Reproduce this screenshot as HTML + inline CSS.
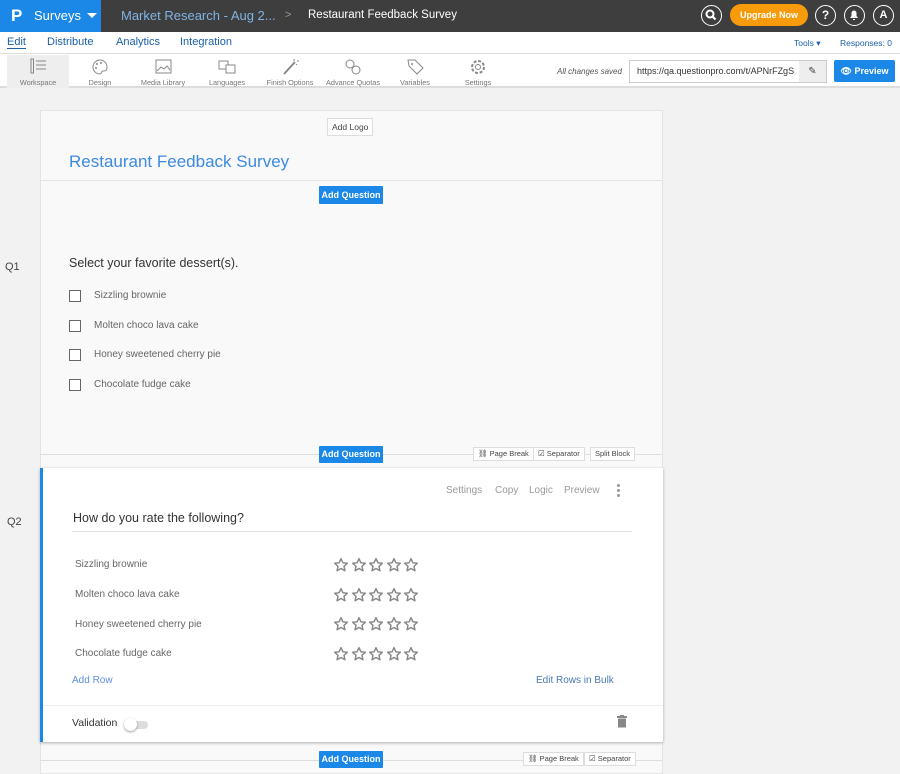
<!DOCTYPE html>
<html><head><meta charset="utf-8">
<style>
*{box-sizing:border-box;margin:0;padding:0}
body{width:900px;height:774px;overflow:hidden;background:#f2f2f2;font-family:"Liberation Sans",sans-serif;position:relative;color:#333}
.a{position:absolute}
.top{left:0;top:0;width:900px;height:32px;background:#3e3e3e}
.blue{left:0;top:0;width:101px;height:32px;background:#1b87e6;color:#fff}
.nav{left:0;top:32px;width:900px;height:22px;background:#fff;border-bottom:1px solid #ddd}
.tb{left:0;top:54px;width:900px;height:34px;background:#fff;border-bottom:2px solid #ddd}
.ti{position:absolute;top:0;height:33px;text-align:center;font-size:7.3px;color:#777}
.ti svg{display:block;margin:3px auto 0}
.ti span{position:absolute;left:0;right:0;top:23px;white-space:nowrap}
.btn{background:#1b87e6;color:#fff;font-size:9px;font-weight:bold;text-align:center;line-height:18px;height:18px;width:64px;border-radius:1px}
.sm{background:#fff;border:1px solid #ddd;font-size:7.5px;color:#444;height:14px;line-height:12px;padding:0 4px;white-space:nowrap}
.opt{font-size:10px;color:#666}
.cb{width:12px;height:12px;border:1px solid #666;background:#fff}
.row{font-size:10px;color:#666;left:75px}
</style></head><body>
<div class="a top"></div>
<div class="a blue">
<div class="a" style="left:11px;top:6px;font-size:17px;font-weight:bold">P</div>
<div class="a" style="left:34px;top:8px;font-size:13px">Surveys</div>
<div class="a" style="left:87px;top:13px;width:0;height:0;border-left:5px solid transparent;border-right:5px solid transparent;border-top:5px solid #fff"></div>
</div>
<div class="a" style="left:121px;top:8px;font-size:13px;color:#7fb4e4">Market Research - Aug 2...</div>
<div class="a" style="left:285px;top:9px;font-size:11px;color:#999">&gt;</div>
<div class="a" style="left:308px;top:9px;font-size:11.5px;color:#fff">Restaurant Feedback Survey</div>
<div class="a" style="left:701px;top:5px;width:21px;height:21px;border:1.5px solid #fff;border-radius:50%"><svg width="18" height="18" viewBox="0 0 18 18"><circle cx="8" cy="8" r="3.5" stroke="#fff" stroke-width="2" fill="none"/><path d="M10.5 10.5l3 3" stroke="#fff" stroke-width="2.2"/></svg></div>
<div class="a" style="left:730px;top:4px;width:78px;height:22px;border-radius:11px;background:#f79b0b;color:#fff;font-size:9px;font-weight:bold;text-align:center;line-height:22px">Upgrade Now</div>
<div class="a" style="left:815px;top:5px;width:21px;height:21px;border:1.5px solid #fff;border-radius:50%;color:#fff;font-weight:bold;font-size:12px;text-align:center;line-height:18px">?</div>
<div class="a" style="left:844px;top:5px;width:21px;height:21px;border:1.5px solid #fff;border-radius:50%"><svg width="18" height="18" viewBox="0 0 18 18"><path d="M5 12h8l-1.5-2V7a2.5 2.5 0 0 0-5 0v3z M8 13h2v1H8z" fill="#fff"/></svg></div>
<div class="a" style="left:873px;top:5px;width:21px;height:21px;border:1.5px solid #fff;border-radius:50%;color:#fff;font-weight:bold;font-size:11px;text-align:center;line-height:18px">A</div>

<div class="a nav"></div>
<div class="a" style="left:7px;top:36px;font-size:11px;color:#1a5fa8;border-bottom:1px solid #1a5fa8;line-height:12px">Edit</div>
<div class="a" style="left:47px;top:36px;font-size:11px;color:#1a5fa8">Distribute</div>
<div class="a" style="left:116px;top:36px;font-size:11px;color:#1a5fa8">Analytics</div>
<div class="a" style="left:180px;top:36px;font-size:11px;color:#1a5fa8">Integration</div>
<div class="a" style="left:794px;top:38px;font-size:8.5px;color:#1a5fa8">Tools ▾</div>
<div class="a" style="left:840px;top:38px;font-size:8.5px;color:#1a5fa8">Responses: 0</div>

<div class="a tb"></div>
<div class="ti" style="left:7px;top:55px;width:62px;background:#eee"><svg width="20" height="18" viewBox="0 0 20 18"><rect x="3" y="1" width="2.5" height="14" fill="none" stroke="#888"/><path d="M8 3h10M8 7h10M8 11h10" stroke="#888"/></svg><span>Workspace</span></div>
<div class="ti" style="left:75px;top:55px;width:50px"><svg width="20" height="18" viewBox="0 0 20 18"><path d="M10 2a7 7 0 1 0 0 14c2 0 1-3 3-3s4 0 4-4a7 7 0 0 0-7-7z" fill="none" stroke="#888"/><circle cx="7" cy="6" r="1" fill="#888"/><circle cx="11" cy="5" r="1" fill="#888"/><circle cx="6" cy="10" r="1" fill="#888"/></svg><span>Design</span></div>
<div class="ti" style="left:138px;top:55px;width:50px"><svg width="20" height="18" viewBox="0 0 20 18"><rect x="3" y="2" width="15" height="13" fill="none" stroke="#888"/><path d="M4 13l4-4 3 2 3-3 3 4" fill="none" stroke="#888"/></svg><span>Media Library</span></div>
<div class="ti" style="left:202px;top:55px;width:50px"><svg width="20" height="18" viewBox="0 0 20 18"><rect x="2" y="3" width="9" height="8" fill="none" stroke="#888"/><rect x="9" y="7" width="9" height="8" fill="#fff" stroke="#888"/></svg><span>Languages</span></div>
<div class="ti" style="left:264px;top:55px;width:52px"><svg width="20" height="18" viewBox="0 0 20 18"><path d="M4 16L15 4" stroke="#888" stroke-width="2"/><path d="M14 1v2M17 3h2M16 6l1 1" stroke="#888"/></svg><span>Finish Options</span></div>
<div class="ti" style="left:324px;top:55px;width:58px"><svg width="20" height="18" viewBox="0 0 20 18"><circle cx="7" cy="6" r="4" fill="none" stroke="#888"/><circle cx="13" cy="12" r="4" fill="none" stroke="#888"/></svg><span>Advance Quotas</span></div>
<div class="ti" style="left:390px;top:55px;width:50px"><svg width="20" height="18" viewBox="0 0 20 18"><path d="M3 2h7l8 8-6 6-8-8z" fill="none" stroke="#888"/><circle cx="7" cy="6" r="1" fill="#888"/></svg><span>Variables</span></div>
<div class="ti" style="left:453px;top:55px;width:50px"><svg width="20" height="18" viewBox="0 0 20 18"><circle cx="10" cy="9" r="6" fill="none" stroke="#888" stroke-width="2" stroke-dasharray="3 1.7"/><circle cx="10" cy="9" r="2.5" fill="none" stroke="#888"/></svg><span>Settings</span></div>
<div class="a" style="left:557px;top:67px;font-size:8px;color:#555;font-style:italic">All changes saved</div>
<div class="a" style="left:629px;top:60px;width:198px;height:23px;border:1px solid #ccc;background:#fff;font-size:9px;color:#333;line-height:21px;padding-left:7px;overflow:hidden;white-space:nowrap">https://qa.questionpro.com/t/APNrFZgS</div>
<div class="a" style="left:799px;top:61px;width:27px;height:21px;background:#eee;font-size:10px;text-align:center;line-height:21px;color:#444">✎</div>
<div class="a" style="left:834px;top:60px;width:61px;height:22px;background:#1b87e6;color:#fff;font-size:9px;font-weight:bold;line-height:22px;text-align:center;border-radius:2px">👁 Preview</div>

<div class="a" style="left:40px;top:110px;width:623px;height:664px;background:#f9f9f9;border:1px solid #e3e3e3"></div>
<div class="a sm" style="left:327px;top:118px;height:18px;line-height:16px;font-size:8.5px">Add Logo</div>
<div class="a" style="left:69px;top:152px;font-size:17px;color:#3d8ae2">Restaurant Feedback Survey</div>
<div class="a" style="left:40px;top:180px;width:623px;height:1px;background:#e3e3e3"></div>
<div class="a btn" style="left:319px;top:186px">Add Question</div>

<div class="a" style="left:5px;top:261px;font-size:11px;color:#444">Q1</div>
<div class="a" style="left:69px;top:256px;font-size:12.5px;color:#333">Select your favorite dessert(s).</div>
<div class="a cb" style="left:69px;top:290px"></div><div class="a opt" style="left:94px;top:290px">Sizzling brownie</div>
<div class="a cb" style="left:69px;top:320px"></div><div class="a opt" style="left:94px;top:320px">Molten choco lava cake</div>
<div class="a cb" style="left:69px;top:349px"></div><div class="a opt" style="left:94px;top:349px">Honey sweetened cherry pie</div>
<div class="a cb" style="left:69px;top:379px"></div><div class="a opt" style="left:94px;top:379px">Chocolate fudge cake</div>

<div class="a" style="left:40px;top:454px;width:623px;height:1px;background:#ddd"></div>
<div class="a btn" style="left:319px;top:446px;height:17px;line-height:17px">Add Question</div>
<div class="a sm" style="left:473px;top:447px">⛓ Page Break</div>
<div class="a sm" style="left:533px;top:447px">☑ Separator</div>
<div class="a sm" style="left:590px;top:447px">Split Block</div>

<div class="a" style="left:7px;top:516px;font-size:11px;color:#444">Q2</div>
<div class="a" style="left:40px;top:468px;width:623px;height:274px;background:#fff;border-left:3px solid #1b87e6;box-shadow:0 1px 3px rgba(0,0,0,.3)"></div>
<div class="a" style="left:446px;top:485px;font-size:10px;color:#999">Settings</div>
<div class="a" style="left:495px;top:485px;font-size:10px;color:#999">Copy</div>
<div class="a" style="left:529px;top:485px;font-size:10px;color:#999">Logic</div>
<div class="a" style="left:564px;top:485px;font-size:10px;color:#999">Preview</div>
<div class="a" style="left:617px;top:484px;width:3px;font-size:0"><div style="width:3px;height:3px;background:#999;border-radius:50%;margin-bottom:2px"></div><div style="width:3px;height:3px;background:#999;border-radius:50%;margin-bottom:2px"></div><div style="width:3px;height:3px;background:#999;border-radius:50%"></div></div>
<div class="a" style="left:73px;top:511px;font-size:12.5px;color:#333">How do you rate the following?</div>
<div class="a" style="left:72px;top:531px;width:560px;height:1px;background:#ddd"></div>
<svg width="0" height="0" style="position:absolute"><defs><symbol id="s" viewBox="0 0 24 24"><path d="M12 2.5l2.9 6.2 6.6.7-5 4.6 1.4 6.6L12 17.2l-5.9 3.4 1.4-6.6-5-4.6 6.6-.7z" fill="none" stroke="#888" stroke-width="2.2" stroke-linejoin="round"/></symbol></defs></svg>
<div class="a row" style="top:559px">Sizzling brownie</div>
<div class="a row" style="top:589px">Molten choco lava cake</div>
<div class="a row" style="top:619px">Honey sweetened cherry pie</div>
<div class="a row" style="top:648px">Chocolate fudge cake</div>
<div class="a" style="left:333px;top:557px;width:90px">
<div style="height:29.6px"><svg width="16" height="16"><use href="#s"/></svg><svg width="16" height="16" style="margin-left:1.6px"><use href="#s"/></svg><svg width="16" height="16" style="margin-left:1.6px"><use href="#s"/></svg><svg width="16" height="16" style="margin-left:1.6px"><use href="#s"/></svg><svg width="16" height="16" style="margin-left:1.6px"><use href="#s"/></svg></div>
<div style="height:29.6px"><svg width="16" height="16"><use href="#s"/></svg><svg width="16" height="16" style="margin-left:1.6px"><use href="#s"/></svg><svg width="16" height="16" style="margin-left:1.6px"><use href="#s"/></svg><svg width="16" height="16" style="margin-left:1.6px"><use href="#s"/></svg><svg width="16" height="16" style="margin-left:1.6px"><use href="#s"/></svg></div>
<div style="height:29.6px"><svg width="16" height="16"><use href="#s"/></svg><svg width="16" height="16" style="margin-left:1.6px"><use href="#s"/></svg><svg width="16" height="16" style="margin-left:1.6px"><use href="#s"/></svg><svg width="16" height="16" style="margin-left:1.6px"><use href="#s"/></svg><svg width="16" height="16" style="margin-left:1.6px"><use href="#s"/></svg></div>
<div style="height:29.6px"><svg width="16" height="16"><use href="#s"/></svg><svg width="16" height="16" style="margin-left:1.6px"><use href="#s"/></svg><svg width="16" height="16" style="margin-left:1.6px"><use href="#s"/></svg><svg width="16" height="16" style="margin-left:1.6px"><use href="#s"/></svg><svg width="16" height="16" style="margin-left:1.6px"><use href="#s"/></svg></div>
</div>
<div class="a" style="left:72px;top:675px;font-size:10px;color:#5d8fe0">Add Row</div>
<div class="a" style="left:536px;top:675px;font-size:10px;color:#4a78b0">Edit Rows in Bulk</div>
<div class="a" style="left:43px;top:705px;width:620px;height:1px;background:#f0f0f0"></div>
<div class="a" style="left:72px;top:717px;font-size:10.5px;color:#333">Validation</div>
<div class="a" style="left:126px;top:721px;width:22px;height:8px;border-radius:4px;background:#ddd"></div>
<div class="a" style="left:124px;top:718px;width:13px;height:13px;border-radius:50%;background:#fff;box-shadow:0 1px 2px rgba(0,0,0,.4)"></div>
<svg class="a" style="left:617px;top:715px" width="10" height="13" viewBox="0 0 10 13"><rect x="0" y="1" width="10" height="2" fill="#888"/><rect x="3" y="0" width="4" height="1.5" fill="#888"/><rect x="1" y="3.5" width="8" height="9" fill="#888"/></svg>

<div class="a" style="left:40px;top:760px;width:623px;height:1px;background:#ddd"></div>
<div class="a btn" style="left:319px;top:751px;height:17px;line-height:17px">Add Question</div>
<div class="a sm" style="left:523px;top:752px">⛓ Page Break</div>
<div class="a sm" style="left:584px;top:752px">☑ Separator</div>
</body></html>
